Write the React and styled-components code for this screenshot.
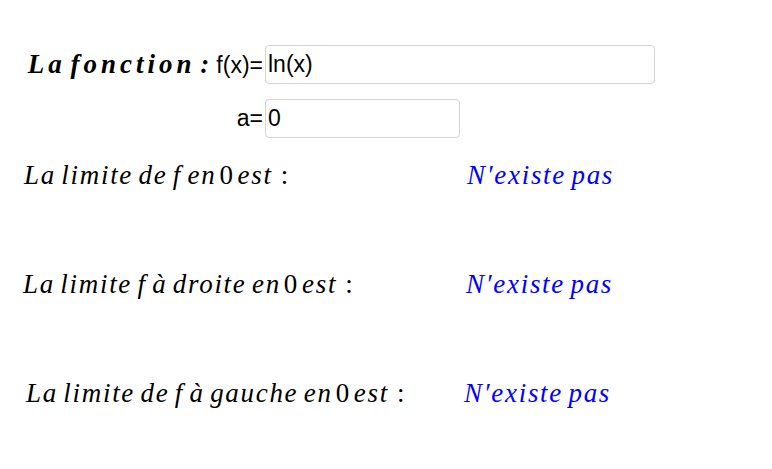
import styled, { createGlobalStyle } from "styled-components";

const Global = createGlobalStyle`
  html, body {
    margin: 0;
    padding: 0;
    background: #ffffff;
  }
`;

const Page = styled.div`
  width: 772px;
  height: 469px;
  padding-top: 45px;
  box-sizing: border-box;
  font-family: "Liberation Sans", Arial, sans-serif;
  color: #000;
`;

const Form = styled.div`
  display: grid;
  grid-template-columns: 265px auto;
  row-gap: 15px;
  align-items: center;
`;

const Label = styled.div`
  display: flex;
  align-items: baseline;
  justify-content: flex-end;
  padding-right: 2px;
  font-size: 23px;
  white-space: nowrap;
`;

const Title = styled.span`
  font-family: "Liberation Serif", "Times New Roman", serif;
  font-style: italic;
  font-weight: bold;
  font-size: 27px;
  letter-spacing: 4px;
  word-spacing: -6px;
  margin-right: 3px;
`;

const Input = styled.input`
  width: ${(p) => p.$w}px;
  height: 39px;
  box-sizing: border-box;
  border: 1px solid #d4d4d4;
  border-radius: 4px;
  padding: 0 2px;
  font-family: "Liberation Sans", Arial, sans-serif;
  font-size: 23px;
  color: #000;
  outline: none;
`;

const Limits = styled.div`
  display: grid;
  grid-template-columns: 440px auto;
  grid-auto-rows: 30px;
  row-gap: 79px;
  margin-top: 22px;
`;

const MathText = styled.div`
  display: flex;
  align-items: center;
  padding-left: ${(p) => p.$indent}px;
  font-family: "Liberation Serif", "Times New Roman", serif;
  font-style: italic;
  font-size: 27px;
  letter-spacing: 1.7px;
  color: ${(p) => p.$color || "#000"};
  white-space: pre;
  word-spacing: -3px;
`;

const Upright = styled.span`
  font-style: normal;
  margin: 0 ${(p) => p.$gap || 3}px;
`;

const rows = [
  { text: "La limite de f en", indent: 24, value: 467 },
  { text: "La limite f à droite en", indent: 23, value: 466 },
  { text: "La limite de f à gauche en", indent: 26, value: 464 },
];

export default function App() {
  return (
    <Page>
      <Global />
      <Form>
        <Label>
          <Title>La fonction :</Title>f(x)=
        </Label>
        <Input $w={390} defaultValue="ln(x)" />
        <Label>a=</Label>
        <Input $w={195} defaultValue="0" />
      </Form>
      <Limits>
        {rows.map((r) => (
          <>
            <MathText key={r.text} $indent={r.indent}>
              {r.text}
              <Upright>0</Upright>est<Upright $gap={8}>:</Upright>
            </MathText>
            <MathText key={r.text + "v"} $indent={r.value - 440} $color="#0000ff">
              N′existe pas
            </MathText>
          </>
        ))}
      </Limits>
    </Page>
  );
}
